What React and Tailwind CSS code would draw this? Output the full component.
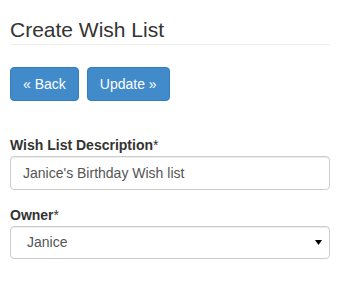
import { useState } from "react";

const App = () => {
  const [description, setDescription] = useState("Janice's Birthday Wish list");
  const [owner, setOwner] = useState("Janice");

  return (
    <div className="w-[343px] h-[288px] overflow-hidden bg-white px-[10px] pt-[18px] font-['Liberation_Sans',Arial,sans-serif] text-[#333]">
      <div className="w-[320px]">
        <h3 className="pb-[3px] border-b border-[#eee] text-[21px] leading-[23px] font-normal">
          Create Wish List
        </h3>

        <div className="flex gap-2 mt-[22px]">
          <button className="h-[34px] px-3 rounded-[4px] border border-[#357ebd] bg-[#428bca] text-white text-[14px] leading-5">
            « Back
          </button>
          <button className="h-[34px] px-3 rounded-[4px] border border-[#357ebd] bg-[#428bca] text-white text-[14px] leading-5">
            Update »
          </button>
        </div>

        <div className="mt-[34px]">
          <label className="block text-[14px] leading-5 font-bold mb-[1px]">
            Wish List Description<span className="font-normal">*</span>
          </label>
          <input
            value={description}
            onChange={(e) => setDescription(e.target.value)}
            className="block w-full h-[34px] px-3 rounded-[4px] border border-[#ccc] shadow-[inset_0_1px_1px_rgba(0,0,0,0.075)] text-[14px] text-[#555] outline-none"
          />
        </div>

        <div className="mt-[15px]">
          <label className="block text-[14px] leading-5 font-bold mb-[1px]">
            Owner<span className="font-normal">*</span>
          </label>
          <div className="relative">
            <select
              value={owner}
              onChange={(e) => setOwner(e.target.value)}
              className="block w-full h-[33px] pl-4 pr-8 rounded-[4px] border border-[#ccc] shadow-[inset_0_1px_1px_rgba(0,0,0,0.075)] bg-white text-[14px] text-[#555] appearance-none outline-none"
            >
              <option>Janice</option>
            </select>
            <svg className="absolute right-[8px] top-[14px] pointer-events-none" width="7" height="5" viewBox="0 0 7 5">
              <path d="M0 0 L7 0 L3.5 5 Z" fill="#000" />
            </svg>
          </div>
        </div>
      </div>
    </div>
  );
};

export default App;
